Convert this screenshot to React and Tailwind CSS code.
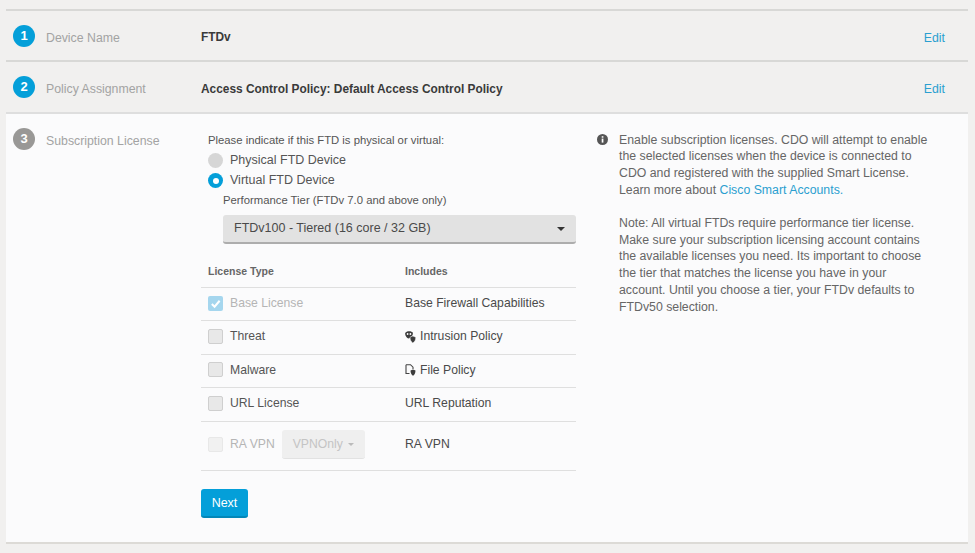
const font = { fontFamily: '"Liberation Sans", Arial, sans-serif' }

const StepBadge = ({ n, active }) => (
  <div className={`w-[22px] h-[22px] rounded-full shrink-0 flex items-center justify-center text-white text-[13px] font-bold ${active ? "bg-[#049fd9]" : "bg-[#999896] -mt-[1px]"}`}>
    {n}
  </div>
)

const DoneStep = ({ n, label, value, tall }) => (
  <div className={`${tall ? "h-[52px]" : "h-[51px]"} flex items-center border-t-2 border-[#d8d8d6] pl-[7px] pr-[23px]`}>
    <StepBadge n={n} active />
    <div className="w-[155px] ml-[11px] pt-[5px] text-[#a3a3a3] text-[12.3px]">{label}</div>
    <div className="flex-1 pt-[5px] font-bold text-[11.9px] text-[#3a3a3a]">{value}</div>
    <a className="pt-[5px] text-[#2b9fd0] text-[12.3px]">Edit</a>
  </div>
)

const Checkbox = ({ checked, faded }) => (
  <div className={`w-[15px] h-[15px] rounded-[2px] flex items-center justify-center ${checked ? "bg-[#a5d6ee]" : faded ? "bg-[#f1f1f1] border border-[#e8e8e8]" : "bg-[#e8e8e8] border border-[#cfcfcf]"}`}>
    {checked && (
      <svg width="11" height="11" viewBox="0 0 12 12" fill="none" stroke="#fff" strokeWidth="2.2">
        <path d="M2 6.5 L5 9.5 L10.5 3" />
      </svg>
    )}
  </div>
)

const IntrusionIcon = () => (
  <svg width="11" height="12" viewBox="0 0 11 12" fill="#3c3c3c">
    <path d="M0.2 2.2 C1.2 -0.2 6.6 -0.4 7.8 1.8 C8.2 3.4 7 5.8 5.2 7 L3.2 7.6 C1.4 6.8 -0.2 4 0.2 2.2 Z" />
    <circle cx="2.6" cy="3" r="0.9" fill="#fff" />
    <circle cx="5.4" cy="3" r="0.9" fill="#fff" />
    <path d="M5 6.2 L7.8 5 L10.8 6.2 C10.8 9 9.6 11 7.8 12 C6.2 11 5 9 5 6.2 Z" stroke="#fbfbfc" strokeWidth="0.5" />
  </svg>
)

const FileIcon = () => (
  <svg width="11" height="12" viewBox="0 0 11 12">
    <path d="M1 0.7 H5.5 L8 3.2 V5 M1 0.7 V9.5 H4.5" fill="none" stroke="#444" strokeWidth="1.1" />
    <path d="M5.5 6.5 L8 5.5 L10.5 6.5 C10.5 9 9.5 11 8 11.8 C6.5 11 5.5 9 5.5 6.5 Z" fill="#3c3c3c" />
  </svg>
)

const LicenseRow = ({ label, includes, icon, checked, faded }) => (
  <div className="h-[33.4px] pb-[2px] flex items-center border-t border-[#dfdfdf] text-[12.2px]">
    <div className="w-[204px] flex items-center pl-[7px]">
      <Checkbox checked={checked} faded={faded} />
      <span className={`ml-[7px] ${faded ? "text-[#b5b5b5]" : "text-[#555]"}`}>{label}</span>
    </div>
    <div className="flex items-center gap-[4px] text-[#4a4a4a]">
      {icon}
      {includes}
    </div>
  </div>
)

export default function App() {
  return (
    <div style={font} className="w-[975px] h-[553px] overflow-hidden bg-[#f1f0ef] pt-[9px] px-[6px]">
      <div className="w-[962px]">
        <DoneStep n="1" label="Device Name" value="FTDv" />
        <DoneStep n="2" label="Policy Assignment" value="Access Control Policy: Default Access Control Policy" tall />

        <div className="h-[432px] bg-[#fbfbfc] border-t-2 border-[#dedede] border-b-2 border-b-[#dcdad6] flex pl-[7px] pt-[14.5px]">
          <div className="w-[188px] flex items-start shrink-0">
            <StepBadge n="3" />
            <div className="ml-[11px] mt-[3px] text-[#a3a3a3] text-[12.3px]">Subscription License</div>
          </div>

          <div className="w-[375px] shrink-0">
            <div className="pl-[7px] text-[11.3px] text-[#555] mt-[3.5px] leading-[16px]">Please indicate if this FTD is physical or virtual:</div>
            <div className="pl-[7px] mt-[2.5px] flex items-center h-[20px] text-[12.5px] text-[#555]">
              <div className="w-[15px] h-[15px] rounded-full bg-[#d6d6d6]" />
              <span className="ml-[7px]">Physical FTD Device</span>
            </div>
            <div className="pl-[7px] flex items-center h-[20px] text-[12.5px] text-[#555]">
              <div className="w-[15px] h-[15px] rounded-full bg-[#049fd9] flex items-center justify-center">
                <div className="w-[6px] h-[6px] rounded-full bg-white" />
              </div>
              <span className="ml-[7px]">Virtual FTD Device</span>
            </div>
            <div className="pl-[22px] text-[11.3px] text-[#555] leading-[16px] mt-[1.5px]">Performance Tier (FTDv 7.0 and above only)</div>
            <div className="ml-[22px] mt-[7px] h-[29px] rounded-[3px] bg-[#e2e2e2] border-b-2 border-[#adadad] flex items-center justify-between pl-[11px] pr-[11px] text-[12.5px] text-[#4a4a4a]">
              <span>FTDv100 - Tiered (16 core / 32 GB)</span>
              <div className="w-0 h-0 border-x-[4px] border-x-transparent border-t-[4px] border-t-[#333]" />
            </div>
            <div className="flex mt-[20px] h-[23px] text-[10.5px] font-bold text-[#666] leading-[14px]">
              <div className="w-[204px] pl-[7px]">License Type</div>
              <div>Includes</div>
            </div>
            <LicenseRow label="Base License" includes="Base Firewall Capabilities" checked faded />
            <LicenseRow label="Threat" includes="Intrusion Policy" icon={<IntrusionIcon />} />
            <LicenseRow label="Malware" includes="File Policy" icon={<FileIcon />} />
            <LicenseRow label="URL License" includes="URL Reputation" />
            <div className="h-[50px] pb-[2px] flex items-center border-t border-b border-[#dfdfdf] text-[12.2px]">
              <div className="w-[204px] flex items-center pl-[7px]">
                <Checkbox faded />
                <span className="ml-[7px] text-[#b5b5b5]">RA VPN</span>
                <div className="ml-[7px] w-[83px] h-[29px] rounded-[3px] bg-[#efefef] border-b border-[#e2e2e2] flex items-center justify-center gap-[5px] text-[#c4c4c4]">
                  VPNOnly
                  <div className="w-0 h-0 border-x-[3px] border-x-transparent border-t-[3px] border-t-[#bbb]" />
                </div>
              </div>
              <div className="text-[#4a4a4a]">RA VPN</div>
            </div>
            <button className="mt-[18px] w-[47px] h-[29px] pt-[2px] rounded-[3px] bg-[#049fd9] border-b-2 border-[#0387b8] text-white text-[12.5px]">Next</button>
          </div>

          <div className="ml-[21px] w-[334px] mt-[3px] flex items-start text-[12.3px] leading-[16.7px] text-[#666]">
            <svg className="mt-[2px] shrink-0" width="11" height="11" viewBox="0 0 11 11">
              <circle cx="5.5" cy="5.5" r="5.5" fill="#555" />
              <rect x="4.7" y="4.6" width="1.7" height="4" fill="#fff" />
              <rect x="4.7" y="2.2" width="1.7" height="1.5" fill="#fff" />
            </svg>
            <div className="ml-[11px]">
              <p>
                Enable subscription licenses. CDO will attempt to enable the selected licenses when the device is connected to CDO and registered with the supplied Smart License. Learn more about <a className="text-[#2b9fd0]">Cisco Smart Accounts.</a>
              </p>
              <p className="mt-[16.7px]">
                Note: All virtual FTDs require performance tier license. Make sure your subscription licensing account contains the available licenses you need. Its important to choose the tier that matches the license you have in your account. Until you choose a tier, your FTDv defaults to FTDv50 selection.
              </p>
            </div>
          </div>
        </div>
      </div>
    </div>
  )
}
